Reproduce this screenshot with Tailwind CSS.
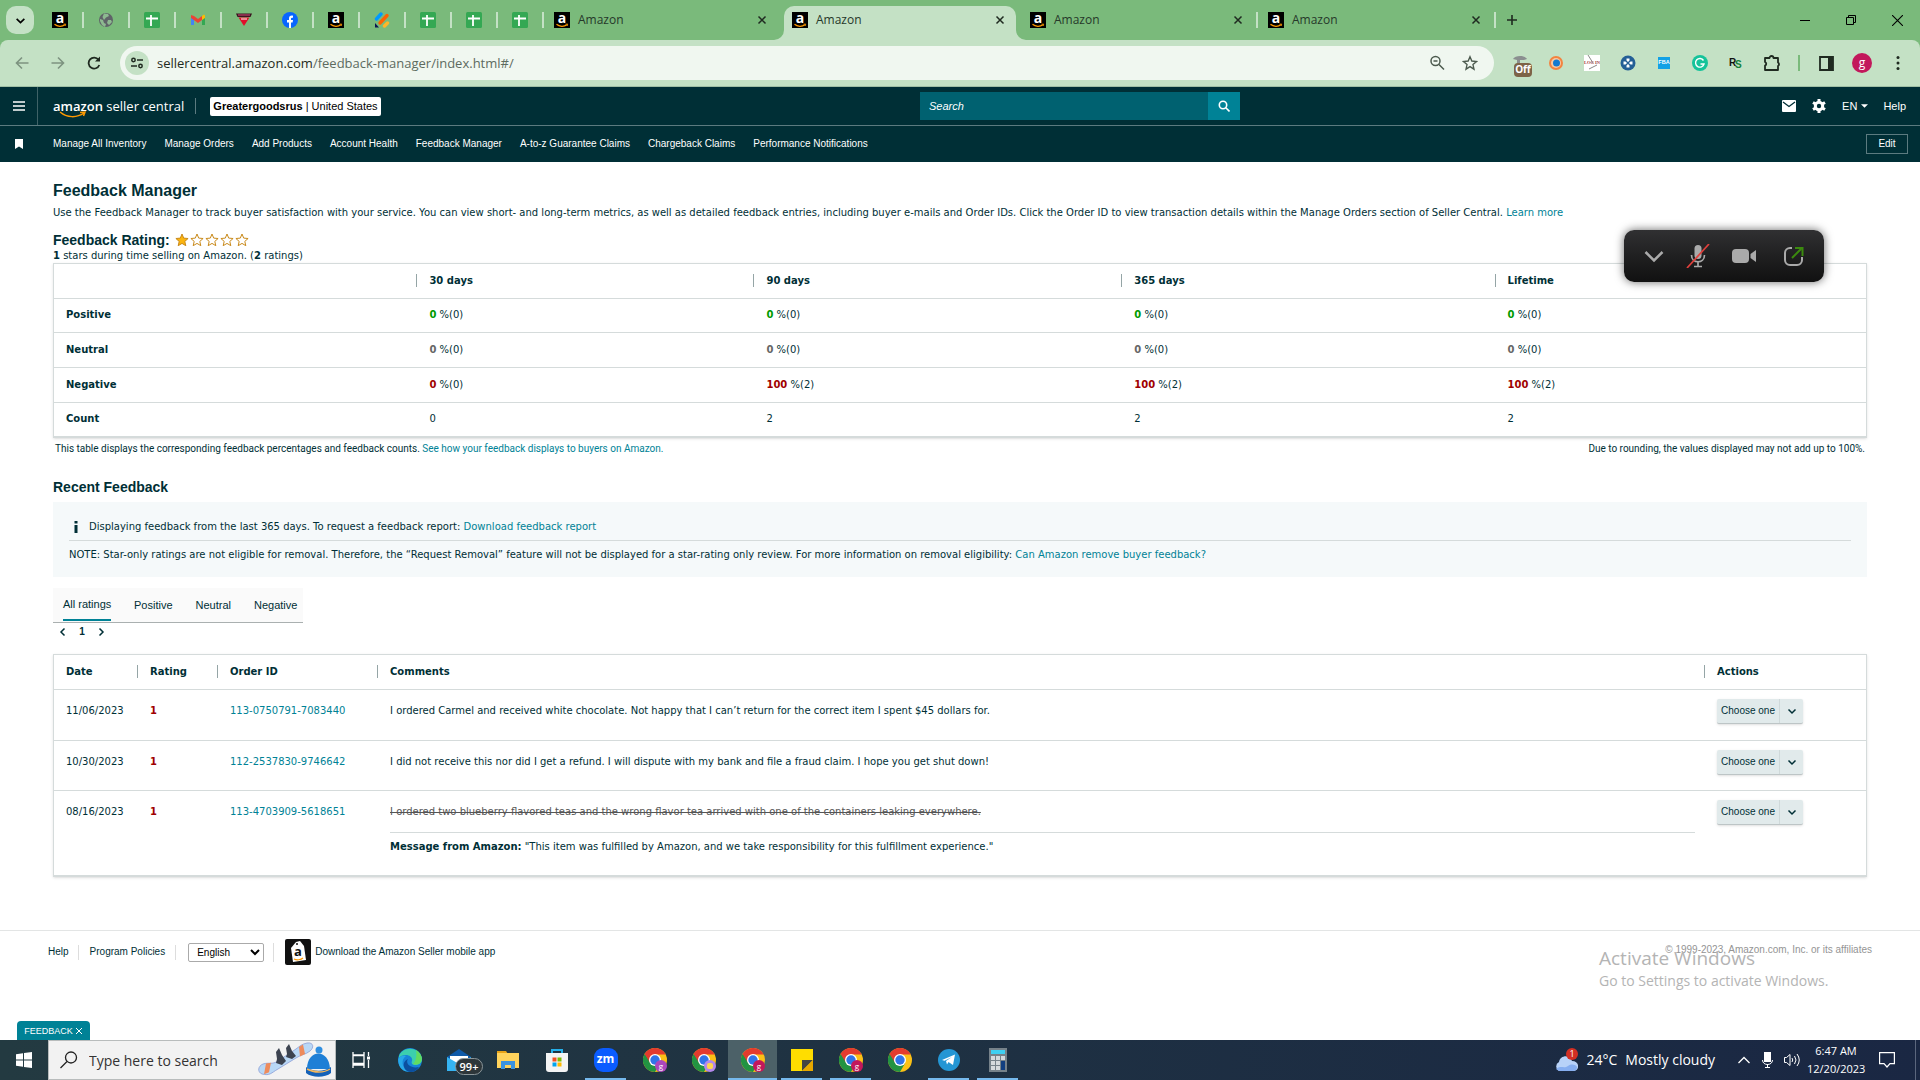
<!DOCTYPE html>
<html lang="en">
<head>
  <meta charset="UTF-8"/>
  <meta name="viewport" content="width=device-width, initial-scale=1.0"/>
  <title>Amazon</title>
  <script src="https://cdn.jsdelivr.net/npm/@tailwindcss/browser@4"></script>
</head>
<body class="bg-white min-h-screen flex flex-col overflow-x-hidden relative font-['DejaVu_Sans',sans-serif] text-[10px] leading-[12px] text-[#002f36]">

  <!-- Shared icons -->
  <svg class="hidden">
    <symbol id="amazon" viewBox="0 0 16 16">
      <rect width="16" height="16" fill="#000"/>
      <text x="8" y="11" font-family="Open Sans, sans-serif" font-weight="700" font-size="14" text-anchor="middle" fill="#fff">a</text>
      <path d="M2.5 12.3c3 2.6 7.500 2.600 10.500.5" fill="none" stroke="#f90" stroke-width="1.300"/>
      <path d="M11.500 12.200l2.200-.2-.5 2" fill="none" stroke="#f90" stroke-width=".8"/>
    </symbol>
    <symbol id="sheet" viewBox="0 0 16 16">
      <rect width="16" height="16" rx="1.500" fill="#34a853"/>
      <path d="M2 6.500h12M7 3v11" stroke="#fff" stroke-width="1.800"/>
    </symbol>
    <symbol id="close" viewBox="0 0 10 10">
      <path d="M1.500 1.500l7 7M8.500 1.500l-7 7" stroke="#1f2a20" stroke-width="1.500"/>
    </symbol>
    <symbol id="down" viewBox="0 0 10 10">
      <path d="M1.500 3.500L5 7l3.500-3.500" fill="none" stroke="currentColor" stroke-width="1.500"/>
    </symbol>
    <symbol id="chrome" viewBox="0 0 24 24">
      <circle cx="12" cy="12" r="12" fill="#fbc116"/>
      <path d="M1.600 6A12 12 0 0 0 12 24l5.200-9L12 12z" fill="#229342"/>
      <path d="M12 6.500h10.700L22.400 6A12 12 0 0 0 1.600 6l5.600 9z" fill="#e33b2e"/>
      <circle cx="12" cy="12" r="6" fill="#fff"/>
      <circle cx="12" cy="12" r="4.700" fill="#3074e8"/>
    </symbol>
    <symbol id="star" viewBox="0 0 14 14">
      <path d="M7 1l1.700 4.100 4.400.4-3.300 2.900 1 4.300L7 10.400l-3.800 2.300 1-4.300L.9 5.500l4.400-.4z" stroke="#c98a1b" stroke-width="1"/>
    </symbol>
  </svg>

  <!-- Browser tabs -->
  <div class="bg-[#7aba7b] h-[40px] flex items-end justify-between font-['Open_Sans',sans-serif] text-[12px] text-[#26382a]">
    <div class="flex h-[34px]">
      <button aria-label="Search tabs" class="ml-[6px] mr-[4px] w-[28px] h-[28px] rounded-[10px] bg-[#c4e1c5] flex items-center justify-center text-black"><svg class="w-[11px] h-[11px]"><use href="#down"/></svg></button>
      <div class="flex h-[28px] items-center">
        <a href="#" aria-label="Amazon" class="w-[46px] h-[16px] flex justify-center border-r-2 border-[#c4e1c5]"><svg class="w-4 h-4"><use href="#amazon"/></svg></a>
        <a href="#" aria-label="Site" class="w-[46px] h-[16px] flex justify-center border-r-2 border-[#c4e1c5]"><svg class="w-4 h-4" viewBox="0 0 16 16"><circle cx="8" cy="8" r="7" fill="#5f6368"/><path d="M2 7l3 1 1 3 2 1-1 3-3-2-2-4zM6 1.500l4 .5 1 2-3 1.500L6 8 4.500 5zM10 8l3 0 1 2-3 3-2-2z" fill="#8db990"/></svg></a>
        <a href="#" aria-label="Sheet" class="w-[46px] h-[16px] flex justify-center border-r-2 border-[#c4e1c5]"><svg class="w-4 h-4"><use href="#sheet"/></svg></a>
        <a href="#" aria-label="Gmail" class="w-[46px] h-[16px] flex justify-center border-r-2 border-[#c4e1c5]"><svg class="w-4 h-4" viewBox="0 0 16 16"><path d="M1 4v9h3V7z" fill="#4285f4"/><path d="M15 4v9h-3V7z" fill="#34a853"/><path d="M1 3l3 1 4 3 4-3v4l-4 3-7-5z" fill="#ea4335"/><path d="M12 4l2-1.500 1 1V6l-3 2z" fill="#fbbc04"/></svg></a>
        <a href="#" aria-label="Site" class="w-[46px] h-[16px] flex justify-center border-r-2 border-[#c4e1c5]"><svg class="w-4 h-4" viewBox="0 0 16 16"><path d="M0 1.500h16L14.500 5h-13z" fill="#3b1520"/><path d="M2 3h12" stroke="#d64a7a"/><path d="M2.500 5.500h11L8 14z" fill="#e0102a"/><path d="M5 7h6" stroke="#fff"/></svg></a>
        <a href="#" aria-label="Facebook" class="w-[46px] h-[16px] flex justify-center border-r-2 border-[#c4e1c5]"><svg class="w-4 h-4" viewBox="0 0 16 16"><circle cx="8" cy="8" r="8" fill="#0866ff"/><path d="M7 16v-5.500H5V8h2V6.500C7 4.300 8.200 3.300 11 3.700v2c-1.500 0-2 .2-2 1.200V8h2l-.4 2.500H9V16z" fill="#fff"/></svg></a>
        <a href="#" aria-label="Amazon" class="w-[46px] h-[16px] flex justify-center border-r-2 border-[#c4e1c5]"><svg class="w-4 h-4"><use href="#amazon"/></svg></a>
        <a href="#" aria-label="Jotform" class="w-[46px] h-[16px] flex justify-center border-r-2 border-[#c4e1c5]"><svg class="w-4 h-4" viewBox="0 0 16 16" fill="none" stroke-width="3.400" stroke-linecap="round"><path d="M2.500 7L7 2" stroke="#0099ff"/><path d="M6 11l7-7.500" stroke="#ff6100"/><path d="M10.500 14l3-3" stroke="#ffb629"/><path d="M1 11v4.500h4z" fill="#0a1551"/></svg></a>
        <a href="#" aria-label="Sheet" class="w-[46px] h-[16px] flex justify-center border-r-2 border-[#c4e1c5]"><svg class="w-4 h-4"><use href="#sheet"/></svg></a>
        <a href="#" aria-label="Sheet" class="w-[46px] h-[16px] flex justify-center border-r-2 border-[#c4e1c5]"><svg class="w-4 h-4"><use href="#sheet"/></svg></a>
        <a href="#" aria-label="Sheet" class="w-[46px] h-[16px] flex justify-center border-r-2 border-[#c4e1c5]"><svg class="w-4 h-4"><use href="#sheet"/></svg></a>
      </div>
      <div class="w-[240px] h-[28px] pl-[10px] pr-[17px] flex items-center gap-2"><svg class="w-4 h-4"><use href="#amazon"/></svg><span class="flex-1">Amazon</span><button aria-label="Close tab"><svg class="w-[10px] h-[10px]"><use href="#close"/></svg></button></div>
      <div class="relative w-[232px] h-[34px] rounded-t-[10px] bg-[#c4e1c5] pb-[6px] pl-[8px] pr-[11px] flex items-center gap-2">
        <svg class="absolute -left-[10px] bottom-0 w-[10px] h-[10px]" viewBox="0 0 10 10"><path d="M10 0v10H0A10 10 0 0 0 10 0" fill="#c4e1c5"/></svg>
        <svg class="absolute -right-[10px] bottom-0 w-[10px] h-[10px]" viewBox="0 0 10 10"><path d="M0 0v10h10A10 10 0 0 1 0 0" fill="#c4e1c5"/></svg>
        <svg class="w-4 h-4"><use href="#amazon"/></svg><span class="flex-1">Amazon</span><button aria-label="Close tab"><svg class="w-[10px] h-[10px]"><use href="#close"/></svg></button>
      </div>
      <div class="w-[242px] h-[28px] flex items-center"><div class="flex-1 h-[16px] pl-[14px] pr-[13px] flex items-center gap-2 border-r-2 border-[#c4e1c5]"><svg class="w-4 h-4"><use href="#amazon"/></svg><span class="flex-1">Amazon</span><button aria-label="Close tab"><svg class="w-[10px] h-[10px]"><use href="#close"/></svg></button></div></div>
      <div class="w-[238px] h-[28px] flex items-center"><div class="flex-1 h-[16px] pl-[10px] pr-[13px] flex items-center gap-2 border-r-2 border-[#c4e1c5]"><svg class="w-4 h-4"><use href="#amazon"/></svg><span class="flex-1">Amazon</span><button aria-label="Close tab"><svg class="w-[10px] h-[10px]"><use href="#close"/></svg></button></div></div>
      <button aria-label="New tab" class="w-[32px] h-[28px] flex items-center justify-center"><svg class="w-3 h-3" viewBox="0 0 12 12"><path d="M6 1v10M1 6h10" stroke="#1f2a20" stroke-width="1.600"/></svg></button>
    </div>
    <div class="flex h-[34px]">
      <button aria-label="Minimize" class="w-[46px] h-[28px] flex items-center justify-center"><svg class="w-[10px] h-[10px]" viewBox="0 0 10 10"><path d="M0 5.500h10" stroke="#000"/></svg></button>
      <button aria-label="Restore" class="w-[46px] h-[28px] flex items-center justify-center"><svg class="w-[10px] h-[10px]" viewBox="0 0 10 10" fill="none" stroke="#000"><path d="M.5 2.500h7v7h-7zM2.500 2.500v-2h7v7h-2"/></svg></button>
      <button aria-label="Close" class="w-[46px] h-[28px] flex items-center justify-center"><svg class="w-[11px] h-[11px]" viewBox="0 0 10 10"><path d="M0 0l10 10M10 0L0 10" stroke="#000"/></svg></button>
    </div>
  </div>

  <!-- Browser toolbar -->
  <div class="bg-[#7aba7b]">
    <div class="h-[47px] bg-[#c4e1c5] rounded-t-[8px] border-b border-[#a0bfa5] flex items-center text-[#1f2a20]">
      <div class="flex pl-1">
        <button aria-label="Back" class="w-9 flex justify-center text-[#7d9380]"><svg class="w-[14px] h-[14px]" viewBox="0 0 14 14" fill="none" stroke="currentColor" stroke-width="1.600"><path d="M13.500 7H1.500M7 1.500L1.500 7 7 12.500"/></svg></button>
        <button aria-label="Forward" class="w-9 flex justify-center text-[#7d9380]"><svg class="w-[14px] h-[14px]" viewBox="0 0 14 14" fill="none" stroke="currentColor" stroke-width="1.600"><path d="M.5 7h12M7 1.500L12.500 7 7 12.500"/></svg></button>
        <button aria-label="Reload" class="w-9 flex justify-center"><svg class="w-[14px] h-[14px]" viewBox="0 0 14 14" fill="none" stroke="currentColor" stroke-width="1.800"><path d="M12.300 9A5.500 5.500 0 1 1 11.500 3.700"/><path d="M13 .5v5H8z" fill="currentColor" stroke="none"/></svg></button>
      </div>
      <div class="ml-2 flex-1 h-[34px] rounded-full bg-[#f0f7f0] flex items-center pl-[5px] pr-4">
        <button aria-label="Site information" class="w-6 h-6 rounded-full bg-[#c4e1c5] flex items-center justify-center"><svg class="w-[14px] h-[14px]" viewBox="0 0 14 14" fill="none" stroke="currentColor" stroke-width="1.500"><circle cx="3.500" cy="4" r="1.700"/><path d="M7 4h6M1 10h6"/><circle cx="10.500" cy="10" r="1.700"/></svg></button>
        <span role="textbox" aria-label="Address" class="pl-2 flex-1 font-['Open_Sans',sans-serif] text-[13px] leading-5">sellercentral.amazon.com<span class="text-[#5d6b5f]">/feedback-manager/index.html#/</span></span>
        <button aria-label="Zoom" class="mr-[17px]"><svg class="w-4 h-4" viewBox="0 0 16 16" fill="none" stroke="#4c5a4e" stroke-width="1.500"><circle cx="6.500" cy="6" r="4.500"/><path d="M4.500 6h4M10 9.500l5 5"/></svg></button>
        <button aria-label="Bookmark"><svg class="w-4 h-4" viewBox="0 0 14 14" fill="none" stroke="#4c5a4e" stroke-width="1.200"><path d="M7 1.500l1.600 3.800 4.100.4-3.100 2.700.9 4L7 10.200l-3.500 2.200.9-4-3.100-2.700 4.100-.4z"/></svg></button>
      </div>
      <div class="flex items-center ml-2 pr-1">
        <button aria-label="Keepa" class="relative w-9 h-7 flex justify-center pt-[6px]"><svg class="w-4 h-3" viewBox="0 0 16 12"><path d="M1 4c2-4 12-4 14 0l-3 1H8v5H5V5z" fill="#8b8f90"/></svg><span class="absolute left-[12px] top-[14px] w-[18px] h-[14px] rounded-[4px] bg-[#7d6347] text-white text-[10px] leading-[13px] font-bold font-['Open_Sans',sans-serif]">Off</span></button>
        <button aria-label="Extension" class="w-9 flex justify-center"><svg class="w-4 h-4" viewBox="0 0 16 16"><circle cx="8" cy="8" r="7" fill="#f3833f"/><circle cx="8" cy="8" r="5" fill="#f9c8a2"/><circle cx="8.500" cy="8" r="3.500" fill="#1579cf"/></svg></button>
        <button aria-label="Log in" class="w-9 flex justify-center"><svg class="w-4 h-4" viewBox="0 0 16 16"><rect width="16" height="16" fill="#fff"/><path d="M4 0l5 8M5 14l8-4" stroke="#888"/><text x="8" y="9" text-anchor="middle" font-family="Liberation Serif" font-weight="700" font-size="4.500" fill="#a03c3c">LOG IN</text></svg></button>
        <button aria-label="Extension" class="w-9 flex justify-center"><svg class="w-4 h-4" viewBox="0 0 16 16"><circle cx="8" cy="8" r="7.500" fill="#245f96"/><path d="M8 3.500v9M3.500 8h9" stroke="#fff" stroke-width="3"/><path d="M6 6l4 4M10 6l-4 4" stroke="#245f96" stroke-width="1.400"/></svg></button>
        <button aria-label="FBA" class="w-9 flex justify-center"><svg class="w-4 h-4" viewBox="0 0 16 16"><rect x="2" y="2" width="12" height="12" fill="#12a1e6"/><text x="8" y="9" text-anchor="middle" font-family="Liberation Sans" font-weight="700" font-size="5.500" fill="#fff">FBA</text></svg></button>
        <button aria-label="Grammarly" class="w-9 flex justify-center"><svg class="w-4 h-4" viewBox="0 0 16 16"><circle cx="8" cy="8" r="8" fill="#15c39a"/><path d="M11.500 5.500A4.300 4.300 0 1 0 12 9H8.500" fill="none" stroke="#fff" stroke-width="1.400"/></svg></button>
        <button aria-label="RevSeller" class="w-9 flex justify-center"><svg class="w-4 h-4" viewBox="0 0 16 16" font-family="Liberation Sans" font-weight="700" font-size="10"><text x="1" y="11" fill="#111">R</text><text x="7" y="13" fill="#14823c">S</text></svg></button>
        <button aria-label="Extensions" class="w-9 flex justify-center"><svg class="w-[18px] h-[18px]" viewBox="0 0 18 18" fill="none" stroke="currentColor" stroke-width="1.800" stroke-linejoin="round"><path d="M2 4h4.500a2 2 0 0 1 4 0H15v4.500a2 2 0 0 1 0 3.500v4H2v-4.300a2 2 0 0 0 0-3.700z"/></svg></button>
        <div class="w-[2px] h-4 bg-[#7aba7b] ml-[8px] mr-[8px]"></div>
        <button aria-label="Side panel" class="w-9 flex justify-center"><svg class="w-[15px] h-[15px]" viewBox="0 0 15 15"><path d="M1 1h13v13H1z" fill="none" stroke="currentColor" stroke-width="1.800"/><path d="M9 1h5v13H9z" fill="currentColor"/></svg></button>
        <button class="mx-2 w-5 h-5 rounded-full bg-[#c2185b] text-white text-[12px] leading-[18px] font-['Open_Sans',sans-serif]">g</button>
        <button aria-label="Menu" class="w-9 flex justify-center"><svg class="w-4 h-4" viewBox="0 0 16 16" fill="currentColor"><circle cx="8" cy="2.500" r="1.500"/><circle cx="8" cy="8" r="1.500"/><circle cx="8" cy="13.500" r="1.500"/></svg></button>
      </div>
    </div>
  </div>

  <!-- Seller Central header -->
  <header class="bg-[#002f36] text-white font-['Liberation_Sans',sans-serif] text-[10px] font-medium">
    <div class="h-[39px] flex items-center border-b border-[#5c7b80] text-[11px]">
      <button aria-label="Menu" class="w-[38px] h-full border-r border-[#3f6267] flex items-center justify-center"><svg class="w-3 h-[10px]" viewBox="0 0 12 10"><path d="M0 1h12M0 5h12M0 9h12" stroke="#fff" stroke-width="1.500"/></svg></button>
      <a href="#" class="w-[142px] ml-[15px] relative font-['Open_Sans',sans-serif] text-[13px] leading-4 whitespace-nowrap"><b class="font-semibold">amazon</b> seller central<svg class="absolute left-[6px] top-[13px] w-[28px] h-[8px]" viewBox="0 0 28 8"><path d="M1 1c7 6 17 6 24 1M21 1.500l5-.5-1.500 4" fill="none" stroke="#f90" stroke-width="1.500"/></svg></a>
      <div class="w-px h-4 bg-[#5c7b80]"></div>
      <button class="ml-[14px] h-[19px] w-[171px] rounded-[2px] bg-white text-black whitespace-nowrap"><b>Greatergoodsrus</b> | United States</button>
      <form class="absolute left-[920px] w-[320px] h-[28px] flex"><input type="text" aria-label="Search" placeholder="Search" class="flex-1 min-w-0 bg-[#006170] pl-[9px] italic placeholder:text-white"/><button type="button" aria-label="Search" class="w-8 bg-[#008296] flex items-center justify-center"><svg class="w-3 h-3" viewBox="0 0 12 12" fill="none" stroke="#fff" stroke-width="1.600"><circle cx="5" cy="5" r="3.700"/><path d="M7.800 7.800l3.700 3.700"/></svg></button></form>
      <div class="ml-auto flex items-center pr-[14px]">
        <button aria-label="Messages"><svg class="w-[14px] h-3" viewBox="0 0 14 12"><rect width="14" height="12" rx="1" fill="#fff"/><path d="M1 2l6 4.500L13 2" fill="none" stroke="#002f36" stroke-width="1.300"/></svg></button>
        <button aria-label="Settings" class="ml-4"><svg class="w-[14px] h-[14px]" viewBox="0 0 14 14"><path d="M7 0v14M1 3.500l12 7M1 10.500l12-7" stroke="#fff" stroke-width="3"/><circle cx="7" cy="7" r="3.700" fill="none" stroke="#fff" stroke-width="3"/><circle cx="7" cy="7" r="2.200" fill="#002f36"/></svg></button>
        <button class="ml-4 flex items-center gap-1">EN<svg class="w-[7px] h-1" viewBox="0 0 8 4"><path d="M0 0h8L4 4z" fill="#fff"/></svg></button>
        <a href="#" class="ml-[15px]">Help</a>
      </div>
    </div>
    <nav class="h-[36px] flex items-center pr-3">
      <svg class="ml-[15px] w-2 h-[10px]" viewBox="0 0 8 10"><path d="M0 0h8v10L4 7.500 0 10z" fill="#fff"/></svg>
      <div class="ml-[30px] flex gap-[18px] flex-1">
        <a href="#">Manage All Inventory</a>
        <a href="#">Manage Orders</a>
        <a href="#">Add Products</a>
        <a href="#">Account Health</a>
        <a href="#">Feedback Manager</a>
        <a href="#">A-to-z Guarantee Claims</a>
        <a href="#">Chargeback Claims</a>
        <a href="#">Performance Notifications</a>
      </div>
      <button class="w-[42px] h-5 border border-[#5c7b80]">Edit</button>
    </nav>
  </header>

  <!-- Main content -->
  <main class="px-[53px] pt-[19px] flex-1">
    <h1 class="font-['Liberation_Sans',sans-serif] text-[16px] leading-5 font-bold">Feedback Manager</h1>
    <p class="mt-[6px]">Use the Feedback Manager to track buyer satisfaction with your service. You can view short- and long-term metrics, as well as detailed feedback entries, including buyer e-mails and Order IDs. Click the Order ID to view transaction details within the Manage Orders section of Seller Central. <a href="#" class="text-[#008296]">Learn more</a></p>
    <div class="mt-[12px] flex items-center h-[18px]">
      <h2 class="font-['Liberation_Sans',sans-serif] text-[14px] leading-[18px] font-bold">Feedback Rating:</h2>
      <div class="flex ml-[5px] gap-px" role="img" aria-label="1 out of 5 stars">
        <svg class="w-[14px] h-[14px]" fill="#fbb510"><use href="#star"/></svg>
        <svg class="w-[14px] h-[14px]" fill="#fff"><use href="#star"/></svg>
        <svg class="w-[14px] h-[14px]" fill="#fff"><use href="#star"/></svg>
        <svg class="w-[14px] h-[14px]" fill="#fff"><use href="#star"/></svg>
        <svg class="w-[14px] h-[14px]" fill="#fff"><use href="#star"/></svg>
      </div>
    </div>
    <p class="mt-px"><b>1</b> stars during time selling on Amazon. (<b>2</b> ratings)</p>

    <div class="mt-px border border-[#d5dbdb] border-b-2 shadow-sm">
      <table class="w-full table-fixed text-left">
        <thead>
          <tr class="h-[34px]">
            <th class="w-[20%]"></th>
            <th class="w-[18.6%]"><div class="flex items-center gap-3"><span class="w-px h-[13px] bg-[#95a5a6]"></span>30 days</div></th>
            <th class="w-[20.3%]"><div class="flex items-center gap-3"><span class="w-px h-[13px] bg-[#95a5a6]"></span>90 days</div></th>
            <th class="w-[20.6%]"><div class="flex items-center gap-3"><span class="w-px h-[13px] bg-[#95a5a6]"></span>365 days</div></th>
            <th><div class="flex items-center gap-3"><span class="w-px h-[13px] bg-[#95a5a6]"></span>Lifetime</div></th>
          </tr>
        </thead>
        <tbody>
          <tr class="h-[34px] border-t border-[#d5dbdb]"><th class="pl-3">Positive</th><td class="pl-[13px]"><b class="text-[#009a00]">0</b> %(0)</td><td class="pl-[13px]"><b class="text-[#009a00]">0</b> %(0)</td><td class="pl-[13px]"><b class="text-[#009a00]">0</b> %(0)</td><td class="pl-[13px]"><b class="text-[#009a00]">0</b> %(0)</td></tr>
          <tr class="h-[35px] border-t border-[#d5dbdb]"><th class="pl-3">Neutral</th><td class="pl-[13px]"><b class="text-[#666]">0</b> %(0)</td><td class="pl-[13px]"><b class="text-[#666]">0</b> %(0)</td><td class="pl-[13px]"><b class="text-[#666]">0</b> %(0)</td><td class="pl-[13px]"><b class="text-[#666]">0</b> %(0)</td></tr>
          <tr class="h-[35px] border-t border-[#d5dbdb]"><th class="pl-3">Negative</th><td class="pl-[13px]"><b class="text-[#a00000]">0</b> %(0)</td><td class="pl-[13px]"><b class="text-[#a00000]">100</b> %(2)</td><td class="pl-[13px]"><b class="text-[#a00000]">100</b> %(2)</td><td class="pl-[13px]"><b class="text-[#a00000]">100</b> %(2)</td></tr>
          <tr class="h-[34px] border-t border-[#d5dbdb]"><th class="pl-3">Count</th><td class="pl-[13px]">0</td><td class="pl-[13px]">2</td><td class="pl-[13px]">2</td><td class="pl-[13px]">2</td></tr>
        </tbody>
      </table>
    </div>
    <div class="mt-[5px] px-[2px] flex justify-between font-['Roboto',sans-serif]">
      <p>This table displays the corresponding feedback percentages and feedback counts. <a href="#" class="text-[#008296]">See how your feedback displays to buyers on Amazon.</a></p>
      <p>Due to rounding, the values displayed may not add up to 100%.</p>
    </div>

    <h2 class="mt-[23px] font-['Liberation_Sans',sans-serif] text-[14px] leading-[18px] font-bold">Recent Feedback</h2>
    <div class="mt-[6px] px-4 h-[75px] bg-[#f5f9fa]">
      <p class="h-[39px] pt-[11px] pl-[5px] border-b border-[#d5dbdb] flex items-center"><svg class="w-1 h-3 mr-[11px]" viewBox="0 0 4 12"><path d="M.5 0h3v2.500h-3zM.5 4h3v8h-3z" fill="#002f36"/></svg>Displaying feedback from the last 365 days. To request a feedback report:&nbsp;<a href="#" class="text-[#008296]">Download feedback report</a></p>
      <p class="mt-[8px]">NOTE: Star-only ratings are not eligible for removal. Therefore, the “Request Removal” feature will not be displayed for a star-rating only review. For more information on removal eligibility: <a href="#" class="text-[#008296]">Can Amazon remove buyer feedback?</a></p>
    </div>

    <div class="mt-[11px] w-[250px] h-[35px] pl-[10px] bg-[#fafafa] border-b border-[#aab0b0] flex gap-[23px] font-['Liberation_Sans',sans-serif] text-[11px] whitespace-nowrap">
      <button class="w-[48px] h-[33px] text-left border-b-2 border-[#008296] font-medium">All ratings</button>
      <button class="h-[33px]">Positive</button>
      <button class="h-[33px]">Neutral</button>
      <button class="h-[33px]">Negative</button>
    </div>
    <div class="h-[18px] pl-[5px] w-[53px] flex items-center justify-between font-bold font-['Liberation_Sans',sans-serif]">
      <button aria-label="Previous"><svg class="w-[10px] h-[10px] rotate-90"><use href="#down"/></svg></button>
      <span>1</span>
      <button aria-label="Next"><svg class="w-[10px] h-[10px] -rotate-90"><use href="#down"/></svg></button>
    </div>

    <div class="mt-[13px] border border-[#d5dbdb] border-b-2 shadow-sm">
      <table class="w-full table-fixed text-left">
        <thead>
          <tr class="h-[34px]">
            <th class="w-[83px] pl-3">Date</th>
            <th class="w-[80px]"><div class="flex items-center gap-3"><span class="w-px h-[13px] bg-[#95a5a6]"></span>Rating</div></th>
            <th class="w-[160px]"><div class="flex items-center gap-3"><span class="w-px h-[13px] bg-[#95a5a6]"></span>Order ID</div></th>
            <th><div class="flex items-center gap-3"><span class="w-px h-[13px] bg-[#95a5a6]"></span>Comments</div></th>
            <th class="w-[162px]"><div class="flex items-center gap-3"><span class="w-px h-[13px] bg-[#95a5a6]"></span>Actions</div></th>
          </tr>
        </thead>
        <tbody class="align-top">
          <tr class="h-[51px] border-t border-[#d5dbdb]">
            <td class="pl-3 pt-[15px]">11/06/2023</td><td class="pl-[13px] pt-[15px] font-bold text-[#a00000]">1</td><td class="pl-[13px] pt-[15px]"><a href="#" class="text-[#008296]">113-0750791-7083440</a></td>
            <td class="pl-[13px] pt-[15px]">I ordered Carmel and received white chocolate. Not happy that I can’t return for the correct item I spent $45 dollars for.</td>
            <td class="pl-[13px] pt-[9px]"><button class="w-[86px] h-[25px] flex items-center rounded-[2px] bg-[#e1eaeb] border-b border-[#bdc5c6] shadow-sm font-['Liberation_Sans',sans-serif]"><span class="w-[63px] h-full leading-6 border-r border-[#cfd9da]">Choose one</span><svg class="w-[10px] h-[10px] mx-auto"><use href="#down"/></svg></button></td>
          </tr>
          <tr class="h-[50px] border-t border-[#d5dbdb]">
            <td class="pl-3 pt-[15px]">10/30/2023</td><td class="pl-[13px] pt-[15px] font-bold text-[#a00000]">1</td><td class="pl-[13px] pt-[15px]"><a href="#" class="text-[#008296]">112-2537830-9746642</a></td>
            <td class="pl-[13px] pt-[15px]">I did not receive this nor did I get a refund. I will dispute with my bank and file a fraud claim. I hope you get shut down!</td>
            <td class="pl-[13px] pt-[9px]"><button class="w-[86px] h-[25px] flex items-center rounded-[2px] bg-[#e1eaeb] border-b border-[#bdc5c6] shadow-sm font-['Liberation_Sans',sans-serif]"><span class="w-[63px] h-full leading-6 border-r border-[#cfd9da]">Choose one</span><svg class="w-[10px] h-[10px] mx-auto"><use href="#down"/></svg></button></td>
          </tr>
          <tr class="h-[85px] border-t border-[#d5dbdb]">
            <td class="pl-3 pt-[15px]">08/16/2023</td><td class="pl-[13px] pt-[15px] font-bold text-[#a00000]">1</td><td class="pl-[13px] pt-[15px]"><a href="#" class="text-[#008296]">113-4703909-5618651</a></td>
            <td class="pl-[13px] pt-[15px] pr-[9px]"><p class="pb-[14px] border-b border-[#d5dbdb] text-[#555]"><s>I ordered two blueberry flavored teas and the wrong flavor tea arrived with one of the containers leaking everywhere.</s></p><p class="mt-[8px]"><b>Message from Amazon:</b> "This item was fulfilled by Amazon, and we take responsibility for this fulfillment experience."</p></td>
            <td class="pl-[13px] pt-[9px]"><button class="w-[86px] h-[25px] flex items-center rounded-[2px] bg-[#e1eaeb] border-b border-[#bdc5c6] shadow-sm font-['Liberation_Sans',sans-serif]"><span class="w-[63px] h-full leading-6 border-r border-[#cfd9da]">Choose one</span><svg class="w-[10px] h-[10px] mx-auto"><use href="#down"/></svg></button></td>
          </tr>
        </tbody>
      </table>
    </div>
  </main>

  <!-- Footer -->
  <footer class="relative h-[110px] border-t border-[#e3e5e5] pl-12 pr-12 pt-[7px] flex items-start justify-between font-['Liberation_Sans',sans-serif] text-[10px]">
    <div class="flex items-center h-[28px]">
      <a href="#">Help</a>
      <span class="mx-[9px] pr-[2px] h-[15px] border-l border-[#ddd]"></span>
      <a href="#">Program Policies</a>
      <span class="mx-[10px] pr-[2px] h-[15px] border-l border-[#ddd]"></span>
      <select aria-label="Language" class="w-[76px] h-[19px] pl-1 border border-[#aaa] rounded-[2px] bg-white text-black"><option>English</option></select>
      <span class="mx-[9px] pr-[2px] h-[19px] border-l border-[#ddd]"></span>
      <a href="#" class="flex items-center gap-1"><svg class="w-[26px] h-[26px]" viewBox="0 0 26 26"><rect width="26" height="26" rx="2" fill="#111"/><path d="M6 9l5-6 4-1 4 5 2 14-13 2z" fill="#fff"/><circle cx="12" cy="5" r="1" fill="#111"/><text x="13" y="17" text-anchor="middle" font-family="Open Sans, sans-serif" font-weight="700" font-size="13" fill="#111">a</text><path d="M9 20c3 1.500 7 .8 9-1" fill="none" stroke="#f90" stroke-width="1.200"/></svg>Download the Amazon Seller mobile app</a>
    </div>
    <p class="mt-[6px] text-[#949494]">© 1999-2023, Amazon.com, Inc. or its affiliates</p>
    <button class="absolute left-[17px] bottom-0 w-[73px] h-[19px] rounded-t-[4px] bg-[#008296] text-white text-[9px] flex items-center justify-center gap-[2px]">FEEDBACK <svg class="w-2 h-2" viewBox="0 0 8 8"><path d="M1 1l6 6M7 1L1 7" stroke="#fff"/></svg></button>
    <div class="absolute right-[84px] top-[14px] w-[237px] text-[#b4b4b4] font-['Open_Sans',sans-serif]">
      <p class="text-[19px] leading-[27px]">Activate Windows</p>
      <p class="text-[14px] leading-[18px]">Go to Settings to activate Windows.</p>
    </div>
  </footer>

  <!-- Meeting controls -->
  <div class="absolute right-[96px] top-[230px] w-[200px] h-[52px] rounded-[10px] bg-linear-to-b from-[#303032] to-[#111] shadow-[0_0_10px_rgba(0,0,0,0.6)] text-[#aaa]">
    <div class="flex h-full items-center gap-[22px] px-5">
      <button aria-label="Expand"><svg class="w-5 h-5" viewBox="0 0 20 20" fill="none" stroke="currentColor" stroke-width="2.500"><path d="M1.500 6L10 14.500 18.500 6"/></svg></button>
      <button aria-label="Unmute"><svg class="w-6 h-6" viewBox="0 0 24 24" fill="none" stroke="currentColor" stroke-width="1.700"><rect x="8.500" y="1" width="7" height="14" rx="3.500" fill="currentColor" stroke="none"/><path d="M5.500 11c0 9 13 9 13 0M12 18v4M8 22.500h8"/><path d="M23 0L1 24" stroke="#e0403c"/></svg></button>
      <button aria-label="Stop video"><svg class="w-6 h-4" viewBox="0 0 24 16" fill="currentColor"><rect y="1" width="17" height="14" rx="4"/><path d="M18.500 6L24 2v12l-5.500-4z"/></svg></button>
      <button aria-label="Share" class="ml-auto"><svg class="w-5 h-5" viewBox="0 0 20 20" fill="none" stroke="currentColor" stroke-width="2"><path d="M8 2H6a5 5 0 0 0-5 5v7a5 5 0 0 0 5 5h7a5 5 0 0 0 5-5v-3"/><path d="M8 12L17 3M11 2h7.500v8" stroke="#3b8a0e"/></svg></button>
    </div>
  </div>

  <!-- Taskbar -->
  <div class="h-10 bg-linear-to-r from-[#233a41] to-[#1a2743] flex items-stretch justify-between text-white font-['Open_Sans',sans-serif]">
    <div class="flex items-stretch">
      <button aria-label="Start" class="w-12 flex items-center justify-center"><svg class="w-4 h-4" viewBox="0 0 16 16" fill="#fff"><path d="M0 2.200L7 1.200v6.400H0zM8 1l8-1v7.600H8zM0 8.400h7v6.400l-7-1zM8 8.400h8V16l-8-1.100z"/></svg></button>
      <label class="w-[288px] bg-[#f2f2f2] border border-[#b8bcbc] flex items-center pl-[11px] text-[#333]">
        <svg class="w-[18px] h-[18px]" viewBox="0 0 18 18" fill="none" stroke="#222" stroke-width="1.300"><circle cx="11" cy="6.500" r="5.500"/><path d="M7 10.500L.5 17"/></svg>
        <input type="text" placeholder="Type here to search" class="ml-[11px] w-[150px] text-[14px] bg-transparent placeholder:text-[#333]"/>
        <svg class="ml-[19px] w-[74px] h-9" viewBox="0 0 74 36"><path d="M4 32c-5-2-4-8 1-10 6-2 9 1 15-3L38 7c4-3 6-5 11-6 7-1 7 5 3 8-5 4-8 3-14 7L20 27c-7 4-8 7-16 5z" fill="#b9d8f6" stroke="#8b9dd6" stroke-width=".8"/><path d="M8 21.500l5-.7-2 9.500-5 2zM41 5l4-2.500 2 9.500-5 2.500z" fill="#ee8b5c"/><path d="M18 10l3-4 3 7 4 6-4 4-6-2 1-4zM28 6l3-4 3 7 4 5-4 3-6-2 1-3z" fill="#3c4350"/><path d="M49 27c0-20 22-21 23 0z" fill="#1e7fd6"/><circle cx="61" cy="8" r="3.500" fill="#2e8ee0"/><path d="M48 25c7 5 18 5 25 0v6c-6 5-19 5-25 0z" fill="#1461b8"/><path d="M49 27c7 4 17 4 23 0" fill="none" stroke="#f3b75c" stroke-width="1.500"/></svg>
      </label>
      <button aria-label="Task view" class="w-[49px] flex items-center justify-center"><svg class="w-[18px] h-[18px]" viewBox="0 0 18 18" fill="none" stroke="#fff" stroke-width="1.300"><path d="M1 1v3h11V1M1 17v-3h11v3M1 4.500h11v8H1zM16.500 1v4M16.500 9v8"/><path d="M15 5.500h3v3h-3z" fill="#fff" stroke="none"/></svg></button>
      <button aria-label="Edge" class="w-[49px] flex items-center justify-center"><svg class="w-6 h-6" viewBox="0 0 24 24"><circle cx="12" cy="12" r="12" fill="#1784d8"/><path d="M1 8C4-1 20-3 24 10c.5 5-3 7-7 7-3 0-4-2-3-4 1-3-2-6-6-6-3 0-6 1-7 3z" fill="#3ccfae"/><path d="M18 2c5 3 7 8 5 12-2 3-6 3-8 2 3-3 4-8 3-14z" fill="#62db60"/><path d="M8 8c-5 3-5 12 3 15.500C3 24 0 17 .3 11 2 8 5 7 8 8z" fill="#28a9e8"/><path d="M10 11c-3 4 2 10 11 8-3 5-8 6-12 4-5-4-4-10 1-12z" fill="#0c4f9e"/></svg></button>
      <button aria-label="Mail" class="relative w-[49px] flex items-center justify-center"><svg class="w-6 h-[22px]" viewBox="0 0 24 22"><path d="M0 8l12-8 12 8v14H0z" fill="#0f5aa8"/><path d="M3 7h18v8H3z" fill="#fff"/><path d="M0 8l12 7 12-7v14H0z" fill="#35b4f2"/></svg><span class="absolute left-[21px] top-[18px] h-[17px] w-[28px] rounded-full border border-[#8a9599] bg-[#2d363a] text-[11px] leading-[15px] font-semibold">99+</span></button>
      <button aria-label="File Explorer" class="w-[49px] flex items-center justify-center"><svg class="w-[22px] h-5" viewBox="0 0 22 20"><path d="M0 1h9l2 3v5H0z" fill="#e8a317"/><path d="M0 3h22v15H0z" fill="#ffd35c"/><path d="M4 11h14v8h-4v-4H8v4H4z" fill="#3a93e0"/></svg></button>
      <button aria-label="Store" class="w-[49px] flex items-center justify-center"><svg class="w-6 h-6" viewBox="0 0 24 24"><path d="M7 7V2h10v5" fill="none" stroke="#25b0ea" stroke-width="2"/><path d="M1 5h22v16a3 3 0 0 1-3 3H4a3 3 0 0 1-3-3z" fill="#f4f4f4"/><path d="M7.500 9.500h4v4h-4z" fill="#f25022"/><path d="M12.500 9.500h4v4h-4z" fill="#7fba00"/><path d="M7.500 14.500h4v4h-4z" fill="#00a4ef"/><path d="M12.500 14.500h4v4h-4z" fill="#ffb900"/></svg></button>
      <button class="relative w-[49px] flex items-center justify-center"><span class="w-6 h-6 rounded-[9px] bg-[#0b5cff] text-[12px] leading-[21px] font-bold">zm</span><span class="absolute bottom-0 inset-x-1 h-[2px] bg-[#76b9ed]"></span></button>
      <button aria-label="Chrome" class="relative w-[49px] flex items-center justify-center"><svg class="w-6 h-6"><use href="#chrome"/></svg><span class="absolute left-[25px] top-[20px] w-3 h-3 rounded-full bg-[#ab47bc] text-[8px] leading-[11px]">g</span></button>
      <button aria-label="Chrome" class="relative w-[49px] flex items-center justify-center"><svg class="w-6 h-6"><use href="#chrome"/></svg><span class="absolute left-[25px] top-[20px] w-3 h-3 rounded-full bg-[#b388eb] p-[3px]"><span class="block h-[6px] rounded-[2px] bg-[#ffd54f]"></span></span></button>
      <button aria-label="Chrome" class="relative w-[49px] bg-[#4c6168] flex items-center justify-center"><svg class="w-6 h-6"><use href="#chrome"/></svg><span class="absolute left-[25px] top-[20px] w-3 h-3 rounded-full bg-[#c2185b] text-[8px] leading-[11px]">g</span><span class="absolute bottom-0 inset-x-0 h-[2px] bg-[#76b9ed]"></span></button>
      <button aria-label="Sticky Notes" class="relative w-[49px] flex items-center justify-center"><svg class="w-[22px] h-[22px]" viewBox="0 0 22 22"><path d="M0 0h22v22H0z" fill="#fd0"/><path d="M11 11h11L11 22z" fill="#444"/><path d="M22 11v11H11z" fill="#e8a800"/></svg><span class="absolute bottom-0 inset-x-1 h-[2px] bg-[#76b9ed]"></span></button>
      <button aria-label="Chrome" class="relative w-[49px] flex items-center justify-center"><svg class="w-6 h-6"><use href="#chrome"/></svg><span class="absolute left-[25px] top-[20px] w-3 h-3 rounded-full bg-[#c2185b] text-[8px] leading-[11px]">g</span><span class="absolute bottom-0 inset-x-1 h-[2px] bg-[#76b9ed]"></span></button>
      <button aria-label="Chrome" class="w-[49px] flex items-center justify-center"><svg class="w-6 h-6"><use href="#chrome"/></svg></button>
      <button aria-label="Telegram" class="relative w-[49px] flex items-center justify-center"><svg class="w-[22px] h-[22px]" viewBox="0 0 22 22"><circle cx="11" cy="11" r="11" fill="#2496d4"/><path d="M4 11l13-5.500L15 16l-4.500-3L9 15.500 8 12l6-4-7.500 3.800z" fill="#fff"/></svg><span class="absolute bottom-0 inset-x-1 h-[2px] bg-[#76b9ed]"></span></button>
      <button aria-label="Calculator" class="relative w-[49px] flex items-center justify-center"><svg class="w-[18px] h-6" viewBox="0 0 18 24"><path d="M0 0h18v24H0z" fill="#76828a"/><path d="M2 2h14v4H2z" fill="#3fd0f2"/><path d="M2 8h4v4H2zM7 8h4v4H7zM12 8h4v4h-4zM2 13h4v4H2zM7 13h4v4H7zM2 18h4v4H2zM7 18h4v4H7z" fill="#d5dadd"/><path d="M12 13h4v9h-4z" fill="#123f80"/></svg><span class="absolute bottom-0 inset-x-1 h-[2px] bg-[#76b9ed]"></span></button>
    </div>
    <div class="flex items-center pr-1 text-[14px]">
      <button class="flex items-center"><svg class="w-6 h-6 mr-2" viewBox="0 0 24 24"><path d="M5 23a5 5 0 0 1 0-9C6 7 16 6 18 13c8 0 8 10 1 10z" fill="#b8d2f8"/><path d="M2 21c5-4 8 0 12-3s8-1 9 1c0 3-2 4-4 4H5z" fill="#86aef0"/><circle cx="18" cy="6" r="6" fill="#d32f23"/><text x="18" y="9" text-anchor="middle" font-size="9" font-family="Open Sans, sans-serif" fill="#fff">1</text></svg>24°C<span class="ml-2">Mostly cloudy</span></button>
      <button aria-label="Hidden icons" class="ml-[23px]"><svg class="w-3 h-2" viewBox="0 0 12 8" fill="none" stroke="#fff" stroke-width="1.300"><path d="M.5 7L6 1.500 11.500 7"/></svg></button>
      <button aria-label="Microphone" class="ml-3"><svg class="w-[11px] h-4" viewBox="0 0 11 16" fill="none" stroke="#fff"><path d="M2 0h7v10H2z" fill="#fff" stroke="none"/><path d="M.5 8c0 6 10 6 10 0M5.500 12v3M3 15.500h5"/></svg></button>
      <button aria-label="Volume" class="ml-[11px]"><svg class="w-4 h-4" viewBox="0 0 16 16" fill="none" stroke="#fff"><path d="M.5 5.500h2L6 2.500v11l-3.500-3h-2zM8 6q1.500 2 0 4M10.500 4q3 4 0 8M13 2q4.500 6 0 12"/></svg></button>
      <div class="ml-[7px] w-[58px] text-center text-[11px] leading-[18px]"><p>6:47 AM</p><p>12/20/2023</p></div>
      <button aria-label="Notifications" class="ml-[14px] mr-5"><svg class="w-4 h-4" viewBox="0 0 16 16" fill="none" stroke="#fff" stroke-width="1.200"><path d="M.6.600h14.800v11H11L8 15l-3-3.400H.6z"/></svg></button>
      <span class="w-px h-10 bg-[#5b667d]"></span>
    </div>
  </div>

</body>
</html>
